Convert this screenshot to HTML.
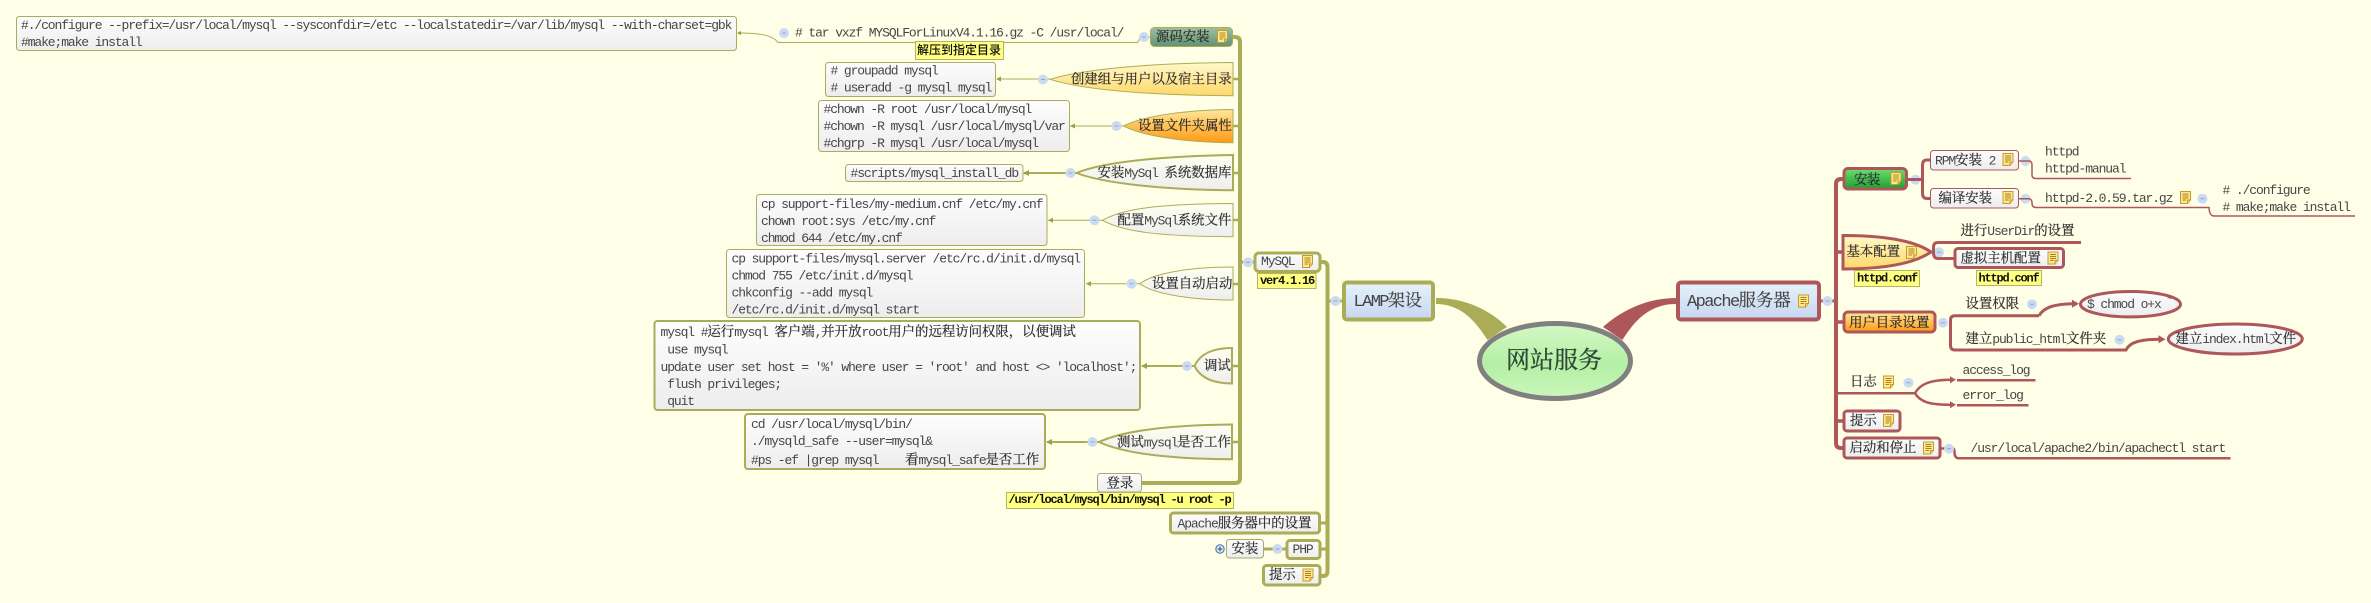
<!DOCTYPE html>
<html><head><meta charset="utf-8">
<style>
html,body{margin:0;padding:0;background:#FEFFE6;width:2371px;height:603px;overflow:hidden}
svg{display:block}
text{font-family:"Liberation Mono","Noto Serif CJK SC",monospace;font-size:13px;letter-spacing:-1.1px;fill:#464646;white-space:pre;transform:translateY(-.8px)}
.c{font-family:"Noto Serif CJK SC","Liberation Serif",serif;font-size:13.4px;letter-spacing:0;fill:#2c2c2c;stroke:#2c2c2c;stroke-width:.2px}
.l{font-family:"Liberation Mono","Noto Sans CJK SC",monospace;font-size:12px;letter-spacing:-1.2px;font-weight:bold;fill:#111}
.lc{font-family:"Noto Sans CJK SC",sans-serif;font-size:12px;letter-spacing:0;font-weight:500;fill:#111}
.big{font-size:17px;letter-spacing:0;fill:#444}
.ol{fill:none;stroke:#ABAC58}
.rd{fill:none;stroke:#AD575B}
.box{fill:url(#gb);stroke:#A8AC5B}
.lab{fill:#FFFF80;stroke:#B4B468;stroke-width:1}
</style></head><body>
<svg width="2371" height="603" viewBox="0 0 2371 603" xmlns="http://www.w3.org/2000/svg">
<defs>
<linearGradient id="gb" x1="0" y1="0" x2="0" y2="1"><stop offset="0" stop-color="#FDFDFD"/><stop offset="1" stop-color="#EDEDED"/></linearGradient>
<linearGradient id="gw" x1="0" y1="0" x2="0" y2="1"><stop offset="0" stop-color="#FEFEF2"/><stop offset="1" stop-color="#EEEEEE"/></linearGradient>
<linearGradient id="gblue" x1="0" y1="0" x2="0" y2="1"><stop offset="0" stop-color="#E6F2FA"/><stop offset="1" stop-color="#C6D6F0"/></linearGradient>
<linearGradient id="ggr" x1="0" y1="0" x2="0" y2="1"><stop offset="0" stop-color="#D4F8C6"/><stop offset=".55" stop-color="#B4F0A4"/><stop offset="1" stop-color="#CCF6BC"/></linearGradient>
<linearGradient id="gteal" x1="0" y1="0" x2="0" y2="1"><stop offset="0" stop-color="#A0BFA2"/><stop offset="1" stop-color="#5F9272"/></linearGradient>
<linearGradient id="gy" x1="0" y1="0" x2="0" y2="1"><stop offset="0" stop-color="#FFF9CC"/><stop offset="1" stop-color="#FFD868"/></linearGradient>
<linearGradient id="go" x1="0" y1="0" x2="0" y2="1"><stop offset="0" stop-color="#FFE79A"/><stop offset="1" stop-color="#FF9A12"/></linearGradient>
<linearGradient id="gg" x1="0" y1="0" x2="0" y2="1"><stop offset="0" stop-color="#70DC70"/><stop offset="1" stop-color="#1FA02E"/></linearGradient>
<symbol id="n" viewBox="0 0 11 13" width="11" height="13">
<path d="M.5 .5H10.5V9L7.5 12.5H.5Z" fill="#FFE88C" stroke="#C89A2C"/>
<path d="M2.5 3H8.5M2.5 5H8.5M2.500 7H8.5M2.5 9H6" stroke="#A8841F" fill="none"/>
<path d="M10.5 9H7.5V12.5" fill="#F4D060" stroke="#C89A2C"/>
</symbol>
<symbol id="m" viewBox="0 0 10 10" width="10" height="10">
<circle cx="5" cy="5" r="5" fill="#CBDAF3"/>
<path d="M3 5H7" stroke="#93A6C6" fill="none"/>
</symbol>
<symbol id="p" viewBox="0 0 10 10" width="10" height="10">
<circle cx="5" cy="5" r="4.2" fill="#D8E4F6" stroke="#4E6E98"/>
<path d="M2.6 5H7.4M5 2.6V7.4" stroke="#2E4E80" fill="none"/>
</symbol>
</defs>

<!-- central wedges -->
<path d="M1436 298C1465 298 1490 310 1507 327L1487.5 340C1475 320 1460 304 1436 304Z" fill="#ABAC58"/>
<path d="M1676 298C1648 298 1622 310 1603 327L1622.5 340C1635 320 1650 304 1676 304Z" fill="#AD575B"/>

<!-- olive spines -->
<path class="ol" stroke-width="4" d="M1232 37H1235Q1240 37 1240 42V478Q1240 483 1235 483H1141"/>
<path class="ol" stroke-width="4" d="M1320 262H1323Q1327.5 262 1327.5 267V571Q1327.5 576 1323 576H1320"/>
<path class="ol" stroke-width="2.5" d="M1233 79H1240M1233 126H1240M1233 173H1240M1233 220H1240M1233 284H1240M1232 366H1240M1232 442H1240"/>
<path class="ol" stroke-width="3" d="M1320 523H1327M1320 549H1327M1263 549H1286M1329 301H1342M1240 262H1254"/>

<!-- left connectors -->
<path class="ol" d="M738 33C755 33 772 34 778 42.5H1137Q1139 42 1140 37H1150"/>
<path d="M737 33l4-2v4z" fill="#8F9A3C"/>
<path class="ol" d="M997 79H1050M1070 126H1124M1048 220.300H1102M1086 283.700H1140"/>
<path class="ol" stroke-width="2" d="M1024 173H1077M1142 366H1195M1047 442H1099"/>
<path d="M996 79l5-2.500v5zM1070 126l5-2.500v5zM1048 220.300l5-2.500v5zM1086 283.700l5-2.500v5zM1023 173l6-3v6zM1141 366l6-3v6zM1046 442l6-3v6z" fill="#9AA046"/>

<!-- box 1 -->
<rect class="box" x="16.500" y="16.500" width="720" height="34" rx="3"/>
<text x="21" y="30">#./configure --prefix=/usr/local/mysql --sysconfdir=/etc --localstatedir=/var/lib/mysql --with-charset=gbk</text>
<text x="21" y="47">#make;make install</text>
<use href="#m" x="779" y="28"/>
<text x="795" y="37.500"># tar vxzf MYSQLForLinuxV4.1.16.gz -C /usr/local/</text>
<use href="#m" x="1139" y="32"/>
<rect class="lab" x="915.500" y="41.500" width="88" height="18"/>
<text class="lc" x="917" y="55"><tspan class="lc">解压到指定目录</tspan></text>

<rect x="1150.500" y="27.500" width="82" height="19" rx="4" fill="url(#gteal)" stroke="#ABAC58"/>
<text x="1156" y="42"><tspan class="c">源码安装</tspan></text>
<use href="#n" x="1217" y="30"/>

<!-- row 2 -->
<rect class="box" x="825.500" y="62.500" width="170" height="34" rx="3"/>
<text x="830.500" y="75.500"># groupadd mysql</text>
<text x="830.500" y="92.500"># useradd -g mysql mysql</text>
<use href="#m" x="1038" y="74.500"/>
<path d="M1233 62.500C1160 63 1087 68 1050 79.300C1087 91 1160 95.500 1233 95.700Z" fill="url(#gy)" stroke="#ABAC58"/>
<text x="1071" y="84.500"><tspan class="c">创建组与用户以及宿主目录</tspan></text>

<!-- row 3 -->
<rect class="box" x="818.500" y="100.500" width="251" height="51" rx="3"/>
<text x="823.500" y="114">#chown -R root /usr/local/mysql</text>
<text x="823.500" y="131">#chown -R mysql /usr/local/mysql/var</text>
<text x="823.500" y="148">#chgrp -R mysql /usr/local/mysql</text>
<use href="#m" x="1111.500" y="121"/>
<path d="M1233 109.500C1189 110 1145 115 1123.500 126C1145 137 1189 142.500 1233 142.700Z" fill="url(#go)" stroke="#ABAC58"/>
<text x="1138" y="131"><tspan class="c">设置文件夹属性</tspan></text>

<!-- row 4 -->
<rect class="box" x="845.500" y="164.500" width="177.500" height="17" rx="3"/>
<text x="850.500" y="178">#scripts/mysql_install_db</text>
<use href="#m" x="1065.500" y="168"/>
<path d="M1233 155C1170 156 1105 161 1076.500 173C1105 184 1170 190 1233 190.300Z" fill="url(#gw)" stroke="#ABAC58" stroke-width="2"/>
<text x="1097.500" y="178"><tspan class="c">安装</tspan>MySql <tspan class="c">系统数据库</tspan></text>

<!-- row 5 -->
<rect class="box" x="756.500" y="194.500" width="290.500" height="51" rx="3"/>
<text x="761" y="209">cp support-files/my-medium.cnf /etc/my.cnf</text>
<text x="761" y="226">chown root:sys /etc/my.cnf</text>
<text x="761" y="243">chmod 644 /etc/my.cnf</text>
<use href="#m" x="1089.500" y="215.300"/>
<path d="M1233 203.500C1155 204 1122 209 1102.500 220.300C1122 231 1155 236.500 1233 236.700Z" fill="url(#gw)" stroke="#ABAC58"/>
<text x="1117.500" y="225.500"><tspan class="c">配置</tspan>MySql<tspan class="c">系统文件</tspan></text>

<!-- row 6 -->
<rect class="box" x="726.500" y="249.500" width="358" height="68" rx="3"/>
<text x="731.500" y="263.500">cp support-files/mysql.server /etc/rc.d/init.d/mysql</text>
<text x="731.500" y="280.500">chmod 755 /etc/init.d/mysql</text>
<text x="731.500" y="297.500">chkconfig --add mysql</text>
<text x="731.500" y="314.500">/etc/rc.d/init.d/mysql start</text>
<use href="#m" x="1126.500" y="278.700"/>
<path d="M1233 267C1195 267 1155 272 1140 283.700C1155 295 1195 300 1233 300Z" fill="url(#gw)" stroke="#ABAC58"/>
<text x="1152" y="289"><tspan class="c">设置自动启动</tspan></text>

<!-- MySQL -->
<use href="#m" x="1243" y="257.300"/>
<rect x="1255" y="253" width="65" height="18.500" rx="4" fill="url(#gb)" stroke="#ABAC58" stroke-width="3"/>
<text x="1261" y="266">MySQL</text>
<use href="#n" x="1302" y="255"/>
<rect class="lab" x="1257.500" y="273.500" width="58.500" height="15"/>
<text class="l" x="1260" y="285">ver4.1.16</text>

<!-- debug -->
<rect class="box" stroke-width="2" x="654.500" y="321" width="485.500" height="89" rx="3"/>
<text x="660.500" y="337">mysql #<tspan class="c">运行</tspan>mysql <tspan class="c">客户端</tspan>,<tspan class="c">并开放</tspan>root<tspan class="c">用户的远程访问权限，以便调试</tspan></text>
<text x="660.500" y="354.500"> use mysql</text>
<text x="660.500" y="372">update user set host = '%' where user = 'root' and host &lt;&gt; 'localhost';</text>
<text x="660.500" y="389"> flush privileges;</text>
<text x="660.500" y="406"> quit</text>
<use href="#m" x="1182" y="361"/>
<path d="M1232 348C1212 348 1200 354 1194.500 366C1200 377 1212 383.500 1232 383.500Z" fill="url(#gw)" stroke="#ABAC58" stroke-width="2"/>
<text x="1204" y="371"><tspan class="c">调试</tspan></text>

<!-- test -->
<rect class="box" stroke-width="2" x="745" y="414" width="300" height="55" rx="3"/>
<text x="751" y="429">cd /usr/local/mysql/bin/</text>
<text x="751" y="446">./mysqld_safe --user=mysql&amp;</text>
<text x="751" y="465">#ps -ef |grep mysql    <tspan class="c">看</tspan>mysql_safe<tspan class="c">是否工作</tspan></text>
<use href="#m" x="1087.500" y="437"/>
<path d="M1232 424.500C1175 425 1125 430 1099 442C1125 454 1175 459 1232 459.300Z" fill="url(#gw)" stroke="#ABAC58" stroke-width="2"/>
<text x="1117" y="447.500"><tspan class="c">测试</tspan>mysql<tspan class="c">是否工作</tspan></text>

<!-- login -->
<rect x="1097.500" y="473.500" width="44" height="18.500" rx="3" fill="url(#gb)" stroke="#A6A878"/>
<text x="1106.500" y="488.500"><tspan class="c">登录</tspan></text>
<rect class="lab" x="1006.500" y="492.500" width="227" height="16"/>
<text class="l" x="1008.500" y="504">/usr/local/mysql/bin/mysql -u root -p</text>

<rect x="1170.500" y="513" width="149" height="20" rx="3" fill="url(#gb)" stroke="#ABAC58" stroke-width="3"/>
<text x="1177.500" y="528.300">Apache<tspan class="c">服务器中的设置</tspan></text>

<use href="#p" x="1215" y="544"/>
<rect x="1226.500" y="539.500" width="37" height="18.500" rx="3" fill="url(#gb)" stroke="#A6A878"/>
<text x="1231.500" y="554"><tspan class="c">安装</tspan></text>
<use href="#m" x="1272.500" y="544"/>
<rect x="1287" y="540.500" width="33" height="18" rx="3" fill="url(#gb)" stroke="#ABAC58" stroke-width="3"/>
<text x="1292.500" y="554">PHP</text>
<rect x="1263.500" y="565.500" width="56.500" height="19.500" rx="3" fill="url(#gb)" stroke="#ABAC58" stroke-width="3"/>
<text x="1269" y="580"><tspan class="c">提示</tspan></text>
<use href="#n" x="1302.500" y="568.500"/>

<!-- LAMP -->
<use href="#m" x="1330.500" y="296"/>
<rect x="1344" y="282.500" width="89" height="37" rx="3" fill="url(#gblue)" stroke="#ABAC58" stroke-width="4"/>
<text class="big" x="1353.500" y="307" style="letter-spacing:-1.6px">LAMP<tspan class="c" style="font-size:17px;fill:#444;stroke:#444">架设</tspan></text>

<!-- center -->
<ellipse cx="1555" cy="361" rx="75.500" ry="37.500" fill="url(#ggr)" stroke="#808080" stroke-width="5"/>
<text x="1506" y="369"><tspan class="c" style="font-size:24px;fill:#2f4a38;stroke:#2f4a38;stroke-width:.35px">网站服务</tspan></text>

<!-- Apache -->
<rect x="1678" y="282.500" width="141" height="37" rx="3" fill="url(#gblue)" stroke="#AD575B" stroke-width="4"/>
<text class="big" x="1687" y="307" style="letter-spacing:-1.6px">Apache<tspan class="c" style="font-size:17.400px;fill:#444;stroke:#444">服务器</tspan></text>
<use href="#n" x="1798" y="294.500"/>
<path class="rd" stroke-width="3" d="M1820 301H1836"/>
<use href="#m" x="1822.500" y="296"/>

<!-- red spine -->
<path class="rd" stroke-width="4" d="M1844 179H1841Q1836 179 1836 184V443Q1836 448 1841 448H1844"/>
<path class="rd" stroke-width="3.500" d="M1836 252H1844M1836 322H1844M1836 421H1844"/>

<!-- install -->
<rect x="1844" y="168.500" width="62.500" height="20.500" rx="4" fill="url(#gg)" stroke="#AD575B" stroke-width="3"/>
<text x="1854" y="185"><tspan class="c" style="letter-spacing:-.5px;fill:#224">安装</tspan></text>
<use href="#n" x="1890.500" y="172"/>
<use href="#m" x="1910.500" y="174.700"/>
<path class="rd" stroke-width="3" d="M1907 179.500H1916M1931 160H1927Q1922.500 160 1922.500 165V193Q1922.500 198.500 1927 198.500H1931M1916 179.500H1922"/>

<rect x="1930.500" y="150.500" width="88" height="19.500" rx="3" fill="url(#gb)" stroke="#AD575B"/>
<text x="1935" y="165.500">RPM<tspan class="c">安装</tspan> 2</text>
<use href="#n" x="2002.500" y="153"/>
<use href="#m" x="2020.500" y="156"/>
<path class="rd" stroke-width="1.500" d="M2019 161H2029Q2032 161 2032 165V175Q2032 178.500 2036 178.500H2131"/>
<text x="2045" y="156.500">httpd</text>
<text x="2045" y="173.500">httpd-manual</text>

<rect x="1930.500" y="188.500" width="88" height="19.500" rx="3" fill="url(#gb)" stroke="#AD575B"/>
<text x="1938.500" y="203.500"><tspan class="c">编译安装</tspan></text>
<use href="#n" x="2002.500" y="191"/>
<use href="#m" x="2020.500" y="193.700"/>
<path class="rd" stroke-width="1.500" d="M2019 198.700H2029Q2032 199 2032 203Q2032 207.500 2036 207.500H2209Q2209.500 216 2214 216H2355"/>
<text x="2045" y="203">httpd-2.0.59.tar.gz</text>
<use href="#n" x="2180" y="191"/>
<use href="#m" x="2197.500" y="193.700"/>
<text x="2222.500" y="195"># ./configure</text>
<text x="2222.500" y="212"># make;make install</text>

<!-- basic config -->
<path d="M1843 235.500C1885 235.500 1915 241 1931 252C1915 263 1885 269 1843 269Z" fill="url(#gy)" stroke="#AD575B" stroke-width="3"/>
<text x="1846.500" y="257"><tspan class="c">基本配置</tspan></text>
<use href="#n" x="1906" y="246"/>
<use href="#m" x="1934" y="247.300"/>
<path class="rd" stroke-width="3" d="M2081 242.500H1938Q1933.500 242.500 1933.500 247V252.500Q1933.500 258.500 1938 258.500H1954"/>
<text x="1960.500" y="236"><tspan class="c">进行</tspan>UserDir<tspan class="c">的设置</tspan></text>
<rect x="1955" y="248.500" width="108.500" height="19" rx="3" fill="url(#gb)" stroke="#AD575B" stroke-width="3"/>
<text x="1960.500" y="263.300"><tspan class="c">虚拟主机配置</tspan></text>
<use href="#n" x="2047.500" y="251.500"/>
<rect class="lab" x="1854.500" y="270.500" width="65" height="16"/>
<text class="l" x="1857" y="282.500">httpd.conf</text>
<rect class="lab" x="1976.500" y="270.500" width="65" height="15"/>
<text class="l" x="1978.500" y="282.500">httpd.conf</text>

<!-- user dir -->
<rect x="1844" y="312" width="91" height="20" rx="4" fill="url(#go)" stroke="#AD575B" stroke-width="3"/>
<text x="1849" y="327.700"><tspan class="c">用户目录设置</tspan></text>
<use href="#m" x="1938" y="317.700"/>
<path class="rd" stroke-width="3" d="M2039 315.700H1955Q1950.500 315.700 1950.500 320V345.500Q1950.500 350 1955 350H2126C2130 342 2140 339.500 2160 339.300M2039 315.700C2044 307 2055 304 2073 303.700"/>
<path d="M2079 303.700l-7-4v8zM2165.500 339.300l-7-4v8z" fill="#AD575B"/>
<text x="1965.500" y="309"><tspan class="c">设置权限</tspan></text>
<use href="#m" x="2027" y="299.300"/>
<ellipse cx="2130.500" cy="304.200" rx="50" ry="12.700" fill="url(#gb)" stroke="#AD575B" stroke-width="3"/>
<text x="2087" y="309">$ chmod o+x</text>
<text x="2167" y="302" style="font-size:9px">~</text>
<text x="1965.500" y="344"><tspan class="c">建立</tspan>public_html<tspan class="c">文件夹</tspan></text>
<use href="#m" x="2114.500" y="334.700"/>
<ellipse cx="2235.300" cy="339" rx="67" ry="15" fill="url(#gb)" stroke="#AD575B" stroke-width="3"/>
<text x="2175.500" y="344"><tspan class="c">建立</tspan>index.html<tspan class="c">文件</tspan></text>

<!-- log -->
<text x="1850" y="387"><tspan class="c">日志</tspan></text>
<use href="#n" x="1883" y="375.500"/>
<use href="#m" x="1903.500" y="377.700"/>
<path class="rd" stroke-width="2.500" d="M1836 393.300H1915C1920 384 1930 380 1950 379.700M1915 393.300C1920 402 1930 404.700 1950 404.700M1957 380.300H2035.500M1957 405.300H2028.500"/>
<path d="M1956 379.700l-6-3.500v7zM1956 404.700l-6-3.500v7z" fill="#AD575B"/>
<text x="1962.500" y="375">access_log</text>
<text x="1962.500" y="400">error_log</text>

<!-- tips -->
<rect x="1844" y="411" width="56" height="20" rx="3" fill="url(#gb)" stroke="#AD575B" stroke-width="3"/>
<text x="1850" y="426"><tspan class="c">提示</tspan></text>
<use href="#n" x="1883" y="414"/>

<!-- start/stop -->
<rect x="1844" y="438" width="96" height="20" rx="3" fill="url(#gb)" stroke="#AD575B" stroke-width="3"/>
<text x="1849.500" y="453"><tspan class="c">启动和停止</tspan></text>
<use href="#n" x="1923" y="441.500"/>
<path class="rd" stroke-width="2.500" d="M1941 448.500H1953Q1954.500 448.500 1954.500 452Q1954.500 458.300 1959 458.300H2230.500"/>
<use href="#m" x="1944" y="443.700"/>
<text x="1970.500" y="453">/usr/local/apache2/bin/apachectl start</text>
</svg>
</body></html>
